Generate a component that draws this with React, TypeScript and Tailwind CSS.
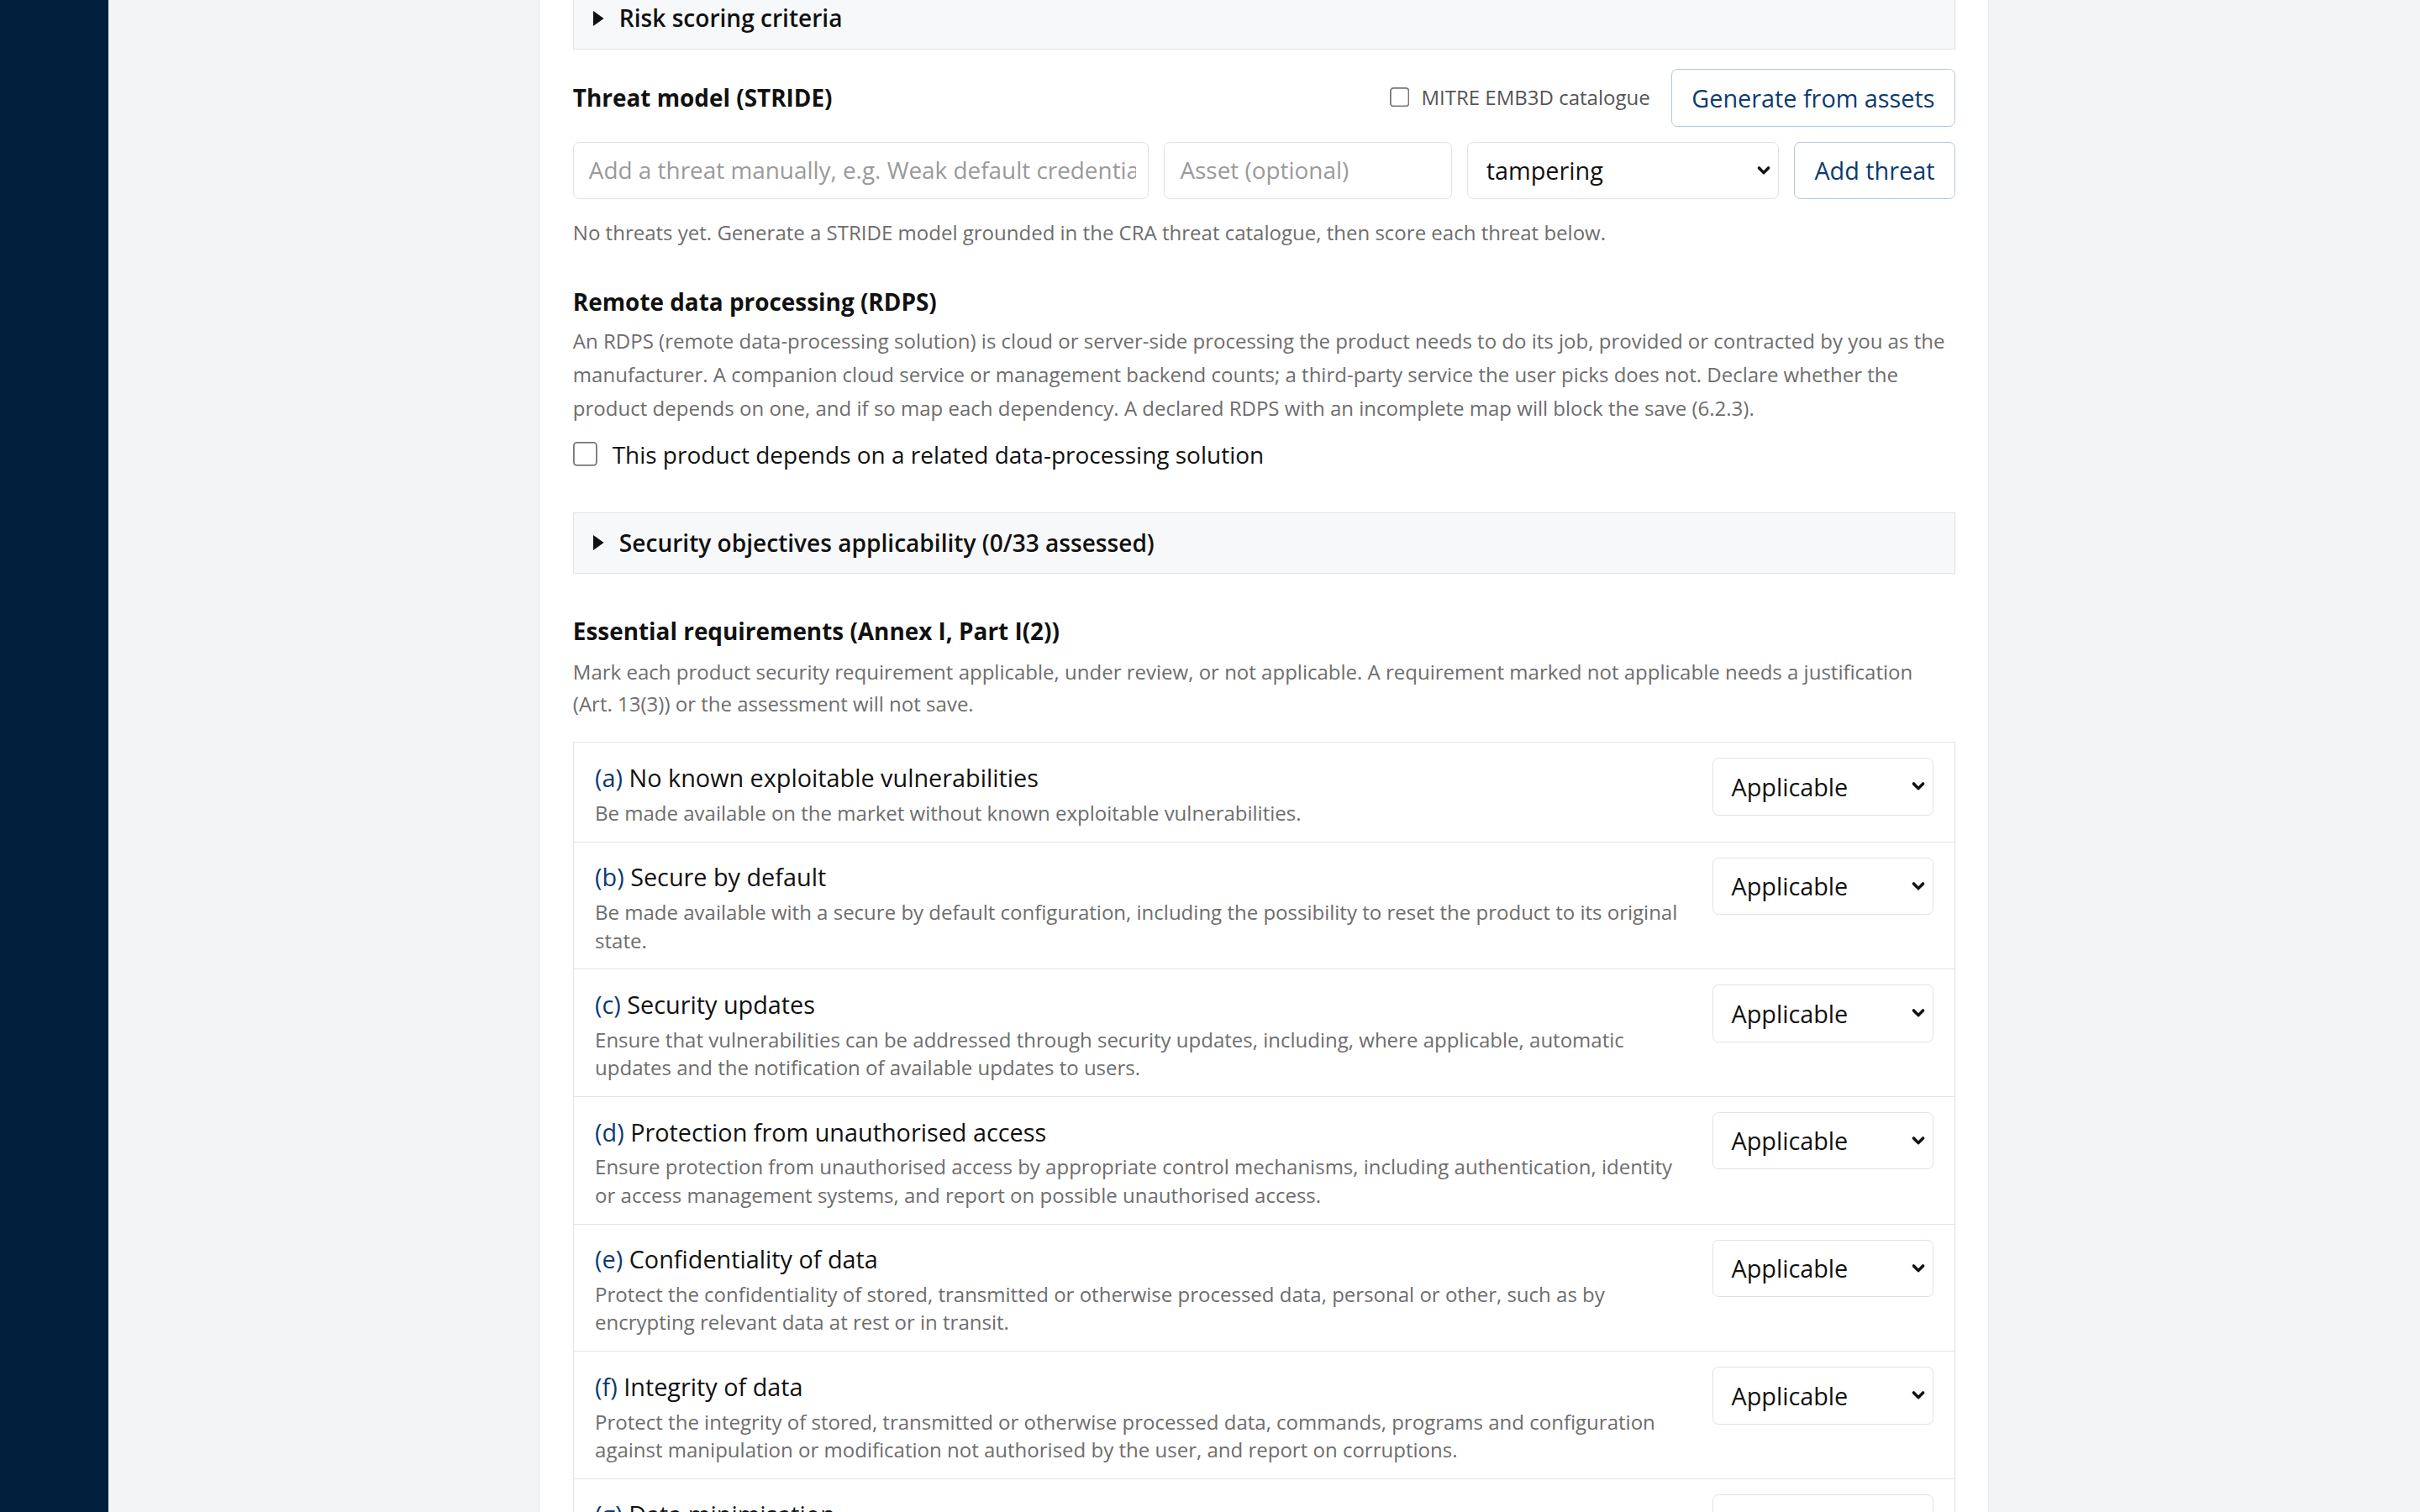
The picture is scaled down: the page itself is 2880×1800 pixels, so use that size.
import React from "react";

type Requirement = { key: string; title: string; desc: string };

const REQUIREMENTS: Requirement[] = [
  {
    key: "a",
    title: "No known exploitable vulnerabilities",
    desc: "Be made available on the market without known exploitable vulnerabilities.",
  },
  {
    key: "b",
    title: "Secure by default",
    desc: "Be made available with a secure by default configuration, including the possibility to reset the product to its original state.",
  },
  {
    key: "c",
    title: "Security updates",
    desc: "Ensure that vulnerabilities can be addressed through security updates, including, where applicable, automatic updates and the notification of available updates to users.",
  },
  {
    key: "d",
    title: "Protection from unauthorised access",
    desc: "Ensure protection from unauthorised access by appropriate control mechanisms, including authentication, identity or access management systems, and report on possible unauthorised access.",
  },
  {
    key: "e",
    title: "Confidentiality of data",
    desc: "Protect the confidentiality of stored, transmitted or otherwise processed data, personal or other, such as by encrypting relevant data at rest or in transit.",
  },
  {
    key: "f",
    title: "Integrity of data",
    desc: "Protect the integrity of stored, transmitted or otherwise processed data, commands, programs and configuration against manipulation or modification not authorised by the user, and report on corruptions.",
  },
  {
    key: "g",
    title: "Data minimisation",
    desc: "Process only data, personal or other, that are adequate, relevant and limited to what is necessary in relation to the intended purpose of the product ('minimisation of data').",
  },
];

const STRIDE = [
  "spoofing",
  "tampering",
  "repudiation",
  "information disclosure",
  "denial of service",
  "elevation of privilege",
];

const APPLICABILITY = ["Applicable", "Under review", "Not applicable"];

function Chevron() {
  return (
    <svg
      viewBox="0 0 10 7"
      className="pointer-events-none absolute right-[5px] top-1/2 h-[6px] w-[10px] -translate-y-1/2"
      fill="none"
      stroke="#111"
      strokeWidth="2.3"
      strokeLinecap="round"
      strokeLinejoin="round"
    >
      <path d="M1.4 1.5 5 5.2 8.6 1.5" />
    </svg>
  );
}

function Select({
  value,
  options,
  className,
}: {
  value: string;
  options: string[];
  className: string;
}) {
  return (
    <div className={"relative " + className}>
      <select
        defaultValue={value}
        className="h-full w-full appearance-none rounded-[4px] border border-[#e2e2e2] bg-white pl-3 pr-6 text-base text-[#111] outline-none"
      >
        {options.map((o) => (
          <option key={o} value={o}>
            {o}
          </option>
        ))}
      </select>
      <Chevron />
    </div>
  );
}

function Disclosure({ label, className = "" }: { label: string; className?: string }) {
  return (
    <details className={"border border-[#e3e3e3] bg-[#f7f8fa] " + className}>
      <summary className="flex cursor-pointer list-none items-center gap-[10px] py-2 pl-[13px] text-[15.6px] font-semibold leading-6 text-[#111] [&::-webkit-details-marker]:hidden">
        <svg viewBox="0 0 7 10" className="h-[10px] w-[7px] shrink-0" fill="#111">
          <polygon points="0,0 7,5 0,10" />
        </svg>
        {label}
      </summary>
    </details>
  );
}

function RequirementRow({ req }: { req: Requirement }) {
  return (
    <div className="flex items-start gap-4 px-3.5 pb-[9.7px] pt-[11px]">
      <div className="min-w-0 flex-1">
        <div className="text-base leading-6 text-[#111]">
          <span className="text-[#0b3a70]">({req.key})</span> {req.title}
        </div>
        <p className="mt-[2px] text-[13.35px] leading-[18.5px] text-[#6d6d6d]">{req.desc}</p>
      </div>
      <Select value="Applicable" options={APPLICABILITY} className="-mt-px h-[38px] w-[146px] shrink-0" />
    </div>
  );
}

export default function App() {
  return (
    <div className="flex h-[1000px] overflow-hidden bg-[#f3f4f6] text-[#111] [font-family:'Open_Sans',sans-serif] [zoom:1.8]">
      <aside className="w-[71.5px] shrink-0 bg-[#00203e]" />

      <main className="min-w-0 flex-1 overflow-hidden">
        <div className="mx-auto -mt-[31px] max-w-[959px] border border-[#e5e7eb] bg-white px-[22px] pb-10 pt-[22px]">
          <Disclosure label="Risk scoring criteria" />

          {/* Threat model */}
          <section className="mt-[13px]">
            <div className="flex h-[38px] items-center justify-between">
              <h3 className="text-[15.5px] font-bold leading-6">Threat model (STRIDE)</h3>
              <div className="flex items-center gap-3.5">
                <label className="flex items-center gap-[7px] text-[13.35px] text-[#555]">
                  <input type="checkbox" className="m-0 h-[14px] w-[14px]" />
                  MITRE EMB3D catalogue
                </label>
                <button className="h-[38px] rounded-[4px] border border-[#b5c6da] bg-white px-[13px] text-base text-[#0b3a70]">
                  Generate from assets
                </button>
              </div>
            </div>

            <div className="mt-2.5 grid h-[38px] grid-cols-[minmax(0,2fr)_minmax(0,1fr)_206px_auto] gap-2.5">
              <input
                className="min-w-0 rounded-[4px] border border-[#e2e2e2] pl-2.5 pr-2 text-[15.5px] outline-none placeholder:text-[#9a9a9a]"
                placeholder="Add a threat manually, e.g. Weak default credentials"
              />
              <input
                className="min-w-0 rounded-[4px] border border-[#e2e2e2] pl-2.5 pr-2 text-[15.5px] outline-none placeholder:text-[#9a9a9a]"
                placeholder="Asset (optional)"
              />
              <Select value="tampering" options={STRIDE} className="h-full" />
              <button className="rounded-[4px] border border-[#b5c6da] bg-white px-[13px] text-base text-[#0b3a70]">
                Add threat
              </button>
            </div>

            <p className="mt-3 text-[13.35px] leading-5 text-[#6d6d6d]">
              No threats yet. Generate a STRIDE model grounded in the CRA threat catalogue, then score each threat below.
            </p>
          </section>

          {/* Remote data processing */}
          <section className="mt-6">
            <h3 className="text-[15.5px] font-bold leading-6">Remote data processing (RDPS)</h3>
            <p className="mt-[3px] text-[13.35px] leading-[22px] text-[#6d6d6d]">
              An RDPS (remote data-processing solution) is cloud or server-side processing the product needs to do its job,
              provided or contracted by you as the manufacturer. A companion cloud service or management backend counts; a
              third-party service the user picks does not. Declare whether the product depends on one, and if so map each
              dependency. A declared RDPS with an incomplete map will block the save (6.2.3).
            </p>
            <label className="mt-2 flex items-center gap-[9px] text-[15.55px] leading-6">
              <input type="checkbox" className="m-0 h-[17px] w-[17px]" />
              This product depends on a related data-processing solution
            </label>
          </section>

          <Disclosure label="Security objectives applicability (0/33 assessed)" className="mt-[26px]" />

          {/* Essential requirements */}
          <section className="mt-[26px]">
            <h3 className="text-[15.5px] font-bold leading-6">Essential requirements (Annex I, Part I(2))</h3>
            <p className="mt-1 text-[13.35px] leading-[21.5px] text-[#6d6d6d]">
              Mark each product security requirement applicable, under review, or not applicable. A requirement marked not
              applicable needs a justification (Art. 13(3)) or the assessment will not save.
            </p>

            <div className="mt-[14px] divide-y divide-[#e3e3e3] border border-[#e3e3e3]">
              {REQUIREMENTS.map((r) => (
                <RequirementRow key={r.key} req={r} />
              ))}
            </div>
          </section>
        </div>
      </main>
    </div>
  );
}
